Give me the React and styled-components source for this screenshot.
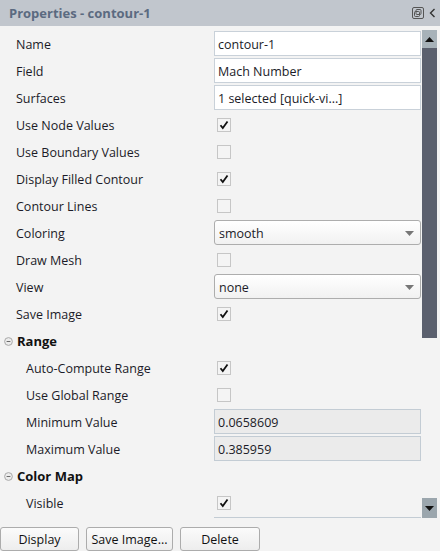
import React from "react";
import styled, { createGlobalStyle } from "styled-components";

const Global = createGlobalStyle`
  html, body { margin: 0; padding: 0; background: #f3f3f3; }
  * { box-sizing: border-box; }
`;

const Panel = styled.div`
  width: 440px;
  height: 551px;
  background: #f3f3f3;
  font-family: "Open Sans", "Noto Sans", sans-serif;
  font-size: 12.5px;
  color: #1b1b28;
  display: flex;
  flex-direction: column;
  overflow: hidden;
`;

const Header = styled.div`
  height: 26px;
  flex: none;
  background: #c1c6cd;
  display: flex;
  align-items: center;
  padding: 0 4px 0 9px;
`;

const Title = styled.div`
  flex: 1;
  font-weight: 700;
  font-size: 13px;
  color: #5b6a80;
`;

const HeaderIcons = styled.div`
  display: flex;
  align-items: center;
  gap: 5px;
`;

const Body = styled.div`
  flex: none;
  height: 492px;
  display: flex;
  padding-top: 4px;
`;

const Content = styled.div`
  width: 422px;
  overflow: hidden;
`;

const Row = styled.div`
  height: 27px;
  display: grid;
  grid-template-columns: 214px 207px;
  align-items: center;
`;

const Label = styled.div`
  padding-left: ${(p) => (p.$sub ? 26 : 16)}px;
  padding-top: 1px;
  white-space: nowrap;
`;

const SectionRow = styled.div`
  height: 27px;
  display: flex;
  align-items: center;
  padding-left: 4px;
  padding-top: 1px;
  gap: 4px;
  font-weight: 700;
  font-size: 13px;
  color: #111;
`;

const TextBox = styled.div`
  height: 25px;
  border: 1px solid ${(p) => (p.$disabled ? "#c3ccd4" : "#c9d1d9")};
  background: ${(p) => (p.$disabled ? "#ebebeb" : "#ffffff")};
  display: flex;
  align-items: center;
  padding: 1px 0 0 3px;
  white-space: nowrap;
  overflow: hidden;
`;

const Select = styled.div`
  height: 25px;
  border: 1px solid #adadad;
  border-radius: 3px;
  background: linear-gradient(#ffffff, #f1f1f1);
  display: flex;
  align-items: center;
  justify-content: space-between;
  padding: 1px 6px 0 4px;
`;

const Check = styled.div`
  width: 14px;
  height: 14px;
  margin: 1px 0 0 3px;
  border: 1px solid #c6c6c6;
  background: #f4f4f4;
  display: flex;
  align-items: center;
  justify-content: center;
`;

const ScrollBar = styled.div`
  width: 15px;
  height: 488px;
  display: flex;
  flex-direction: column;
`;

const ScrollBtn = styled.div`
  height: ${(p) => p.$h}px;
  background: ${(p) => p.$bg};
  display: flex;
  align-items: center;
  justify-content: center;
  flex: none;
`;

const Thumb = styled.div`
  height: 290px;
  background: #5b606e;
  flex: none;
`;

const Track = styled.div`
  flex: 1;
`;

const ButtonBar = styled.div`
  display: flex;
  gap: 7px;
  padding-top: 9px;
`;

const Button = styled.div`
  width: ${(p) => p.$w}px;
  height: 24px;
  border: 1px solid #acacac;
  border-radius: 3px;
  background: linear-gradient(#fbfbfb, #ededed);
  display: flex;
  align-items: center;
  justify-content: center;
  padding-top: 1px;
  color: #111;
`;

const CheckMark = () => (
  <svg width="10" height="10" viewBox="0 0 10 10">
    <path d="M1.5 5.2 L3.8 8 L8.5 1.5" stroke="#111" strokeWidth="1.8" fill="none" />
  </svg>
);

const Arrow = () => (
  <svg width="9" height="5" viewBox="0 0 9 5">
    <path d="M0 0 H9 L4.5 5 Z" fill="#777" />
  </svg>
);

const Minus = () => (
  <svg width="9" height="9" viewBox="0 0 9 9">
    <circle cx="4.5" cy="4.5" r="3.9" fill="#ececec" stroke="#a9a9a9" strokeWidth="1" />
    <path d="M2.6 4.5 H6.4" stroke="#6a6a6a" strokeWidth="1" />
  </svg>
);

const Field = ({ label, sub, children }) => (
  <Row>
    <Label $sub={sub}>{label}</Label>
    <div>{children}</div>
  </Row>
);

const Box = ({ checked }) => <Check>{checked && <CheckMark />}</Check>;

export default function App() {
  return (
    <Panel>
      <Global />
      <Header>
        <Title>Properties - contour-1</Title>
        <HeaderIcons>
          <svg width="12" height="12" viewBox="0 0 12 12">
            <rect x="0.5" y="0.5" width="11" height="11" rx="1.5" fill="none" stroke="#555" />
            <rect x="4" y="2.5" width="5" height="5" rx="1" fill="none" stroke="#555" />
            <rect x="2.5" y="4.5" width="5" height="5" rx="1" fill="none" stroke="#555" />
          </svg>
          <svg width="7" height="10" viewBox="0 0 7 10">
            <path d="M5.5 1 L1.5 5 L5.5 9" stroke="#333" strokeWidth="1.4" fill="none" />
          </svg>
        </HeaderIcons>
      </Header>
      <Body>
        <Content>
          <Field label="Name"><TextBox>contour-1</TextBox></Field>
          <Field label="Field"><TextBox>Mach Number</TextBox></Field>
          <Field label="Surfaces"><TextBox>1 selected [quick-vi...]</TextBox></Field>
          <Field label="Use Node Values"><Box checked /></Field>
          <Field label="Use Boundary Values"><Box /></Field>
          <Field label="Display Filled Contour"><Box checked /></Field>
          <Field label="Contour Lines"><Box /></Field>
          <Field label="Coloring"><Select>smooth<Arrow /></Select></Field>
          <Field label="Draw Mesh"><Box /></Field>
          <Field label="View"><Select>none<Arrow /></Select></Field>
          <Field label="Save Image"><Box checked /></Field>
          <SectionRow><Minus />Range</SectionRow>
          <Field sub label="Auto-Compute Range"><Box checked /></Field>
          <Field sub label="Use Global Range"><Box /></Field>
          <Field sub label="Minimum Value"><TextBox $disabled>0.0658609</TextBox></Field>
          <Field sub label="Maximum Value"><TextBox $disabled>0.385959</TextBox></Field>
          <SectionRow><Minus />Color Map</SectionRow>
          <Field sub label="Visible"><Box checked /></Field>
          <Field sub label=""><TextBox $disabled /></Field>
        </Content>
        <ScrollBar>
          <ScrollBtn $h={18} $bg="#a7b2b9">
            <svg width="9" height="5" viewBox="0 0 9 5"><path d="M0 5 H9 L4.5 0 Z" fill="#111" /></svg>
          </ScrollBtn>
          <Thumb />
          <Track />
          <ScrollBtn $h={20} $bg="#9ba6ad">
            <svg width="9" height="5" viewBox="0 0 9 5"><path d="M0 0 H9 L4.5 5 Z" fill="#111" /></svg>
          </ScrollBtn>
        </ScrollBar>
      </Body>
      <ButtonBar>
        <Button $w={79}>Display</Button>
        <Button $w={87}>Save Image...</Button>
        <Button $w={80}>Delete</Button>
      </ButtonBar>
    </Panel>
  );
}
